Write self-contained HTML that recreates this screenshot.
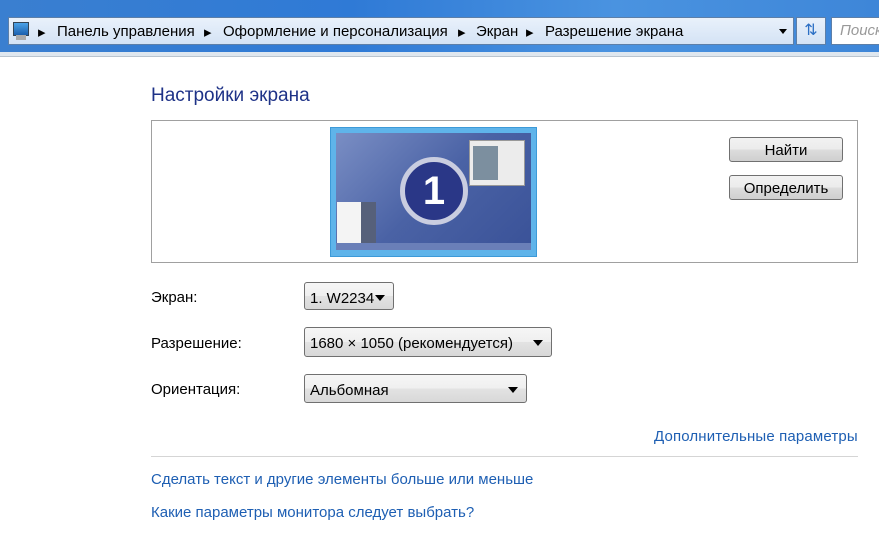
<!DOCTYPE html><html><head><meta charset="utf-8"><style>
body{margin:0;width:879px;height:533px;overflow:hidden;background:#fff;font-family:"Liberation Sans",sans-serif;position:relative}
.a{position:absolute}
.top{left:0;top:0;width:879px;height:52px;background:linear-gradient(90deg,#3a7fd0,#2f7ad6 40%,#4a93e0 70%,#3e86d8)}
.addr{left:8px;top:17px;width:786px;height:28px;background:linear-gradient(#e9f1fb,#d4e3f5);border:1px solid #5d7fa8;box-sizing:border-box;font-size:15px;color:#000}
.lbl{font-size:15px;color:#000}
.link{font-size:15px;color:#1e5fb3}
.sel{border:1px solid #707070;border-radius:3px;background:linear-gradient(#f6f6f6,#efefef 50%,#e3e3e3 50%,#d8d8d8);box-sizing:border-box;font-size:15px;padding:6px 5px;color:#000}
.tri{position:absolute;right:8px;top:12px;width:0;height:0;border-left:5px solid transparent;border-right:5px solid transparent;border-top:6px solid #000}
.btn{border:1px solid #707070;border-radius:3px;background:linear-gradient(#f2f2f2,#ebebeb 50%,#dddddd 50%,#cfcfcf);box-sizing:border-box;font-size:15px;text-align:center;line-height:25px}
.bc{position:absolute;top:5px;white-space:nowrap}
</style></head><body>
<div class="a top"></div>
<div class="a addr">
 <div class="a" style="left:4px;top:4px;width:14px;height:12px;background:linear-gradient(#4ba3e8,#1b5fae);border:1px solid #345"></div>
 <div class="a" style="left:7px;top:17px;width:10px;height:5px;background:#aaa"></div>
 <span class="bc" style="left:29px">▸</span><span class="bc" style="left:48px">Панель управления</span>
 <span class="bc" style="left:195px">▸</span><span class="bc" style="left:214px">Оформление и персонализация</span>
 <span class="bc" style="left:449px">▸</span><span class="bc" style="left:467px">Экран</span>
 <span class="bc" style="left:517px">▸</span><span class="bc" style="left:536px">Разрешение экрана</span>
 <div class="a" style="left:770px;top:11px;border-left:4px solid transparent;border-right:4px solid transparent;border-top:5px solid #000"></div>
</div>
<div class="a" style="left:796px;top:17px;width:30px;height:28px;background:linear-gradient(#e9f1fb,#d4e3f5);border:1px solid #5d7fa8;box-sizing:border-box;color:#2c6fc4;text-align:center;font-size:16px;line-height:26px">⇅</div>
<div class="a" style="left:831px;top:17px;width:60px;height:28px;background:#fff;border:1px solid #5d7fa8;box-sizing:border-box;color:#999;font-style:italic;font-size:15px;padding:4px 8px">Поиск</div>
<div class="a" style="left:0;top:52px;width:879px;height:4px;background:#dfe7ef;border-bottom:1px solid #b9c4cf"></div>
<div class="a" style="left:151px;top:85px;font-size:19px;color:#1e3287">Настройки экрана</div>
<div class="a" style="left:151px;top:120px;width:707px;height:143px;border:1px solid #a0a0a0;box-sizing:border-box"></div>
<div class="a" style="left:330px;top:127px;width:207px;height:130px;background:#5fb4ea;box-sizing:border-box;border:1px solid #3d9ad8">
 <div class="a" style="left:5px;top:5px;width:195px;height:117px;background:linear-gradient(135deg,#7a8ec4,#4a62a5 50%,#3a5298)"></div>
 <div class="a" style="left:5px;top:115px;width:195px;height:7px;background:#6a7fb8"></div>
 <div class="a" style="left:138px;top:12px;width:54px;height:44px;background:#ececec;border:1px solid #999"><div class="a" style="left:3px;top:5px;width:25px;height:34px;background:#7c8f9f"></div></div>
 <div class="a" style="left:6px;top:74px;width:24px;height:41px;background:#f4f4f4"></div>
 <div class="a" style="left:30px;top:74px;width:15px;height:41px;background:#56607a"></div>
 <div class="a" style="left:69px;top:29px;width:68px;height:68px;border-radius:50%;background:#2a3787;border:5px solid #c9cde0;box-sizing:border-box;color:#fff;font-weight:bold;font-size:40px;text-align:center;line-height:58px">1</div>
</div>
<div class="a btn" style="left:729px;top:137px;width:114px;height:25px">Найти</div>
<div class="a btn" style="left:729px;top:175px;width:114px;height:25px">Определить</div>
<div class="a lbl" style="left:151px;top:289px">Экран:</div>
<div class="a lbl" style="left:151px;top:335px">Разрешение:</div>
<div class="a lbl" style="left:151px;top:381px">Ориентация:</div>
<div class="a sel" style="left:304px;top:282px;width:90px;height:28px;padding-top:7px">1. W2234<div class="tri"></div></div>
<div class="a sel" style="left:304px;top:327px;width:248px;height:30px;padding-top:7px">1680 × 1050 (рекомендуется)<div class="tri"></div></div>
<div class="a sel" style="left:304px;top:374px;width:223px;height:29px;padding-top:7px">Альбомная<div class="tri"></div></div>
<div class="a link" style="left:654px;top:428px;letter-spacing:0.15px">Дополнительные параметры</div>
<div class="a" style="left:151px;top:456px;width:707px;height:1px;background:#d5d5d5"></div>
<div class="a link" style="left:151px;top:471px">Сделать текст и другие элементы больше или меньше</div>
<div class="a link" style="left:151px;top:504px">Какие параметры монитора следует выбрать?</div>
</body></html>
